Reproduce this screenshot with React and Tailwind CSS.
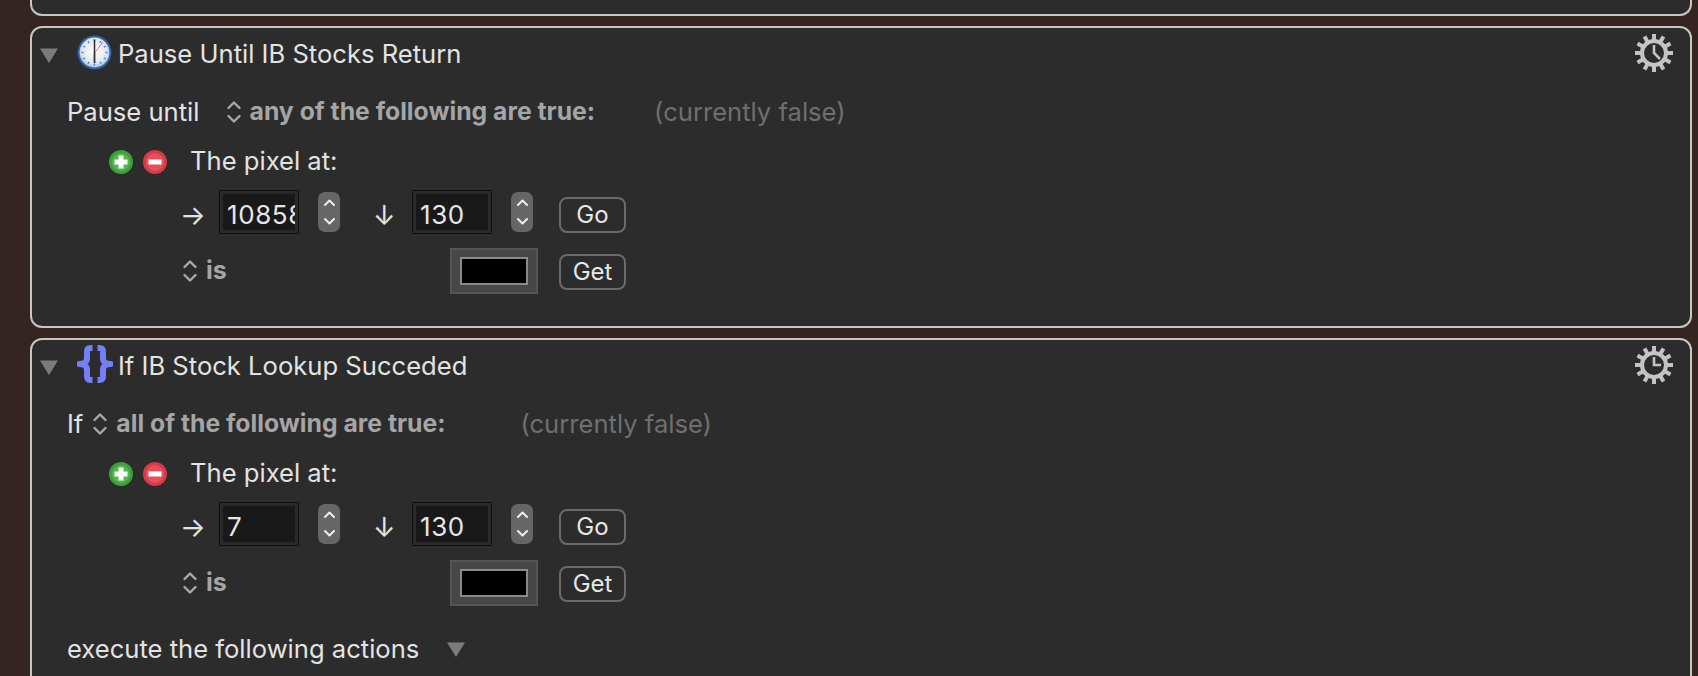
const font = { fontFamily: 'Inter, "Liberation Sans", sans-serif' }

function Triangle({ className }) {
  return (
    <svg className={className} width="18" height="15" viewBox="0 0 18 15">
      <path d="M0 0.5H18L9 15Z" fill="#7b7b7b" />
    </svg>
  )
}

function UpDown({ className }) {
  return (
    <svg className={className} width="16" height="24" viewBox="0 0 16 24" fill="none" stroke="#a9a9a9" strokeWidth="2.4" strokeLinecap="round" strokeLinejoin="round">
      <path d="M2.5 8 8 2.5 13.5 8" />
      <path d="M2.5 16 8 21.5 13.5 16" />
    </svg>
  )
}

function ClockIcon() {
  const ticks = [30, 60, 90, 120, 150, 180, 210, 240, 270, 300, 330, 0]
  return (
    <svg width="35" height="35" viewBox="0 0 35 35">
      <defs>
        <radialGradient id="face" cx="50%" cy="45%" r="55%">
          <stop offset="0%" stopColor="#ffffff" />
          <stop offset="75%" stopColor="#e2e6ec" />
          <stop offset="100%" stopColor="#a9c0dc" />
        </radialGradient>
      </defs>
      <circle cx="17.5" cy="17.5" r="17" fill="#2b62a8" />
      <circle cx="17.5" cy="17.5" r="15" fill="url(#face)" />
      {ticks.map((a) => (
        <rect key={a} x="16.8" y="4.5" width="1.4" height="2.2" fill="#3f86e0" transform={`rotate(${a} 17.5 17.5)`} />
      ))}
      <path d="M17.5 18 26 7" stroke="#e8705f" strokeWidth="1" />
      <path d="M17.5 18V4.5" stroke="#2a2a2a" strokeWidth="1.5" />
      <path d="M17.5 18V28" stroke="#333333" strokeWidth="1.8" />
    </svg>
  )
}

function BracesIcon() {
  return (
    <svg width="36" height="38" viewBox="0 0 36 38" fill="none" stroke="#7480f8" strokeWidth="6" strokeLinejoin="round">
      <path d="M15.5 3H13.5C11 3 10 4.5 10 7V13.5C10 16.5 7 19 2.5 19 7 19 10 21.5 10 24.5V31C10 33.5 11 35 13.5 35H15.5" />
      <path d="M20.5 3H22.5C25 3 26 4.5 26 7V13.5C26 16.5 29 19 33.5 19 29 19 26 21.5 26 24.5V31C26 33.5 25 35 22.5 35H20.5" />
    </svg>
  )
}

function GearClock({ hands }) {
  const teeth = [0, 30, 60, 90, 120, 150, 180, 210, 240, 270, 300, 330]
  return (
    <svg width="38" height="38" viewBox="0 0 38 38" fill="none" stroke="#c4c4c4">
      {teeth.map((a) => (
        <rect key={a} x="17" y="0" width="4" height="8" fill="#c4c4c4" stroke="none" transform={`rotate(${a} 19 19)`} />
      ))}
      <circle cx="19" cy="19" r="12" strokeWidth="4" fill="#2c2c2c" />
      <path d={hands} strokeWidth="2.6" />
    </svg>
  )
}

function PlusButton() {
  return (
    <svg width="24" height="24" viewBox="0 0 24 24">
      <circle cx="12" cy="12" r="12" fill="#3f9f3a" />
      <circle cx="12" cy="12" r="9" fill="#55b64c" />
      <path d="M9.5 5.5h5v4h4v5h-4v4h-5v-4h-4v-5h4z" fill="#ffffff" />
    </svg>
  )
}

function MinusButton() {
  return (
    <svg width="24" height="24" viewBox="0 0 24 24">
      <circle cx="12" cy="12" r="12" fill="#d83a4c" />
      <circle cx="12" cy="12" r="9" fill="#e5505a" />
      <rect x="5.5" y="9.5" width="13" height="5" fill="#ffffff" />
    </svg>
  )
}

function Stepper() {
  return (
    <div className="ml-[19px] flex h-[40px] w-[22px] items-center justify-center rounded-[7px] bg-[#666666]">
      <svg width="13" height="28" viewBox="0 0 13 28" fill="none" stroke="#eeeeee" strokeWidth="2" strokeLinecap="round" strokeLinejoin="round">
        <path d="M2 7 6.5 2.5 11 7" />
        <path d="M2 21 6.5 25.5 11 21" />
      </svg>
    </div>
  )
}

function NumberField({ value }) {
  return (
    <div className="h-[44px] w-[80px] rounded-[1px] border border-[#0f0f0f] bg-[#2a2a2a] p-[3px]">
      <div className="h-full overflow-hidden bg-[#191919] pl-[4px] text-[26px] leading-[42px] tracking-[0.6px] whitespace-nowrap text-[#e6e6e6]">
        {value}
      </div>
    </div>
  )
}

function SmallButton({ children, className }) {
  return (
    <div className={`flex h-[36px] w-[67px] items-center justify-center rounded-[8px] border-2 border-[#6a6a6a] text-[24px] text-[#e6e6e6] ${className || ''}`}>
      {children}
    </div>
  )
}

function ActionCard({ icon, title, hands, condition, x, firstGap, stateGap, withActions }) {
  return (
    <div className={`rounded-[12px] border-2 border-[#c9c5c1] bg-[#2c2c2c] text-[#e3e3e3] ${withActions ? 'h-[400px]' : 'h-[302px]'}`}>
      {/* title row */}
      <div className="flex h-[54px] items-center pr-[17px] pl-[8px]">
        <Triangle />
        <div className="ml-[19px] flex w-[41px] -translate-y-[3px] justify-start">{icon}</div>
        <span className="mb-[2px] text-[25.6px]">{title}</span>
        <div className="ml-auto -translate-y-[2px]">
          <GearClock hands={hands} />
        </div>
      </div>

      {/* pause until / if */}
      <div className="flex h-[58px] items-center pt-[2px] pl-[35px] text-[25.6px]">
        <span>{condition}</span>
        <UpDown className={firstGap} />
        <span className="ml-[8px] text-[24.75px] font-bold text-[#a5a5a5]">{x}</span>
        <span className={`text-[#6f6f6f] ${stateGap}`}>(currently false)</span>
      </div>

      {/* the pixel at */}
      <div className="flex h-[44px] items-center pl-[77px]">
        <PlusButton />
        <div className="ml-[10px]"><MinusButton /></div>
        <span className="mb-[2px] ml-[23px] text-[25.6px]">The pixel at:</span>
      </div>

      {/* coordinates */}
      <div className="flex h-[56px] items-center pl-[148px]">
        <span className="w-[39px] translate-y-[3px] text-[27px] leading-none">→</span>
        <NumberField value={title.startsWith('Pause') ? '10858' : '7'} />
        <Stepper />
        <span className="ml-[33px] w-[39px] translate-y-[3px] text-[27px] leading-none">↓</span>
        <NumberField value="130" />
        <Stepper />
        <SmallButton className="mt-[6px] ml-[26px]">Go</SmallButton>
      </div>

      {/* is */}
      <div className="flex h-[62px] items-center pl-[150px]">
        <div className="flex w-[268px] items-center">
          <UpDown />
          <span className="ml-[8px] text-[25px] font-bold text-[#a5a5a5]">is</span>
        </div>
        <div className="flex h-[46px] w-[88px] items-center justify-center bg-[#474747] shadow-[inset_0_0_0_2px_#555555]">
          <div className="h-[28px] w-[68px] border-2 border-[#8a8a8a] bg-black" />
        </div>
        <SmallButton className="mt-[2px] ml-[21px]">Get</SmallButton>
      </div>

      {withActions && (
        <div className="mt-[16px] flex items-center pl-[35px] text-[25.6px]">
          <span>execute the following actions</span>
          <Triangle className="ml-[28px]" />
        </div>
      )}
    </div>
  )
}

export default function App() {
  return (
    <div style={font} className="h-[676px] overflow-hidden bg-[#352522] pr-[6px] pl-[30px]">
      <div className="h-[16px] rounded-b-[12px] border-x-2 border-b-2 border-[#c9c5c1] bg-[#2c2c2c]" />
      <div className="mt-[10px] flex flex-col gap-[10px]">
        <ActionCard
          icon={<ClockIcon />}
          title="Pause Until IB Stocks Return"
          hands="M19 11V19L25 25"
          condition="Pause until"
          x="any of the following are true:"
          firstGap="ml-[26px]"
          stateGap="ml-[59px]"
        />
        <ActionCard
          icon={<BracesIcon />}
          title="If IB Stock Lookup Succeded"
          hands="M19 11V19H26"
          condition="If"
          x="all of the following are true:"
          firstGap="ml-[9px]"
          stateGap="ml-[75px]"
          withActions
        />
      </div>
    </div>
  )
}
